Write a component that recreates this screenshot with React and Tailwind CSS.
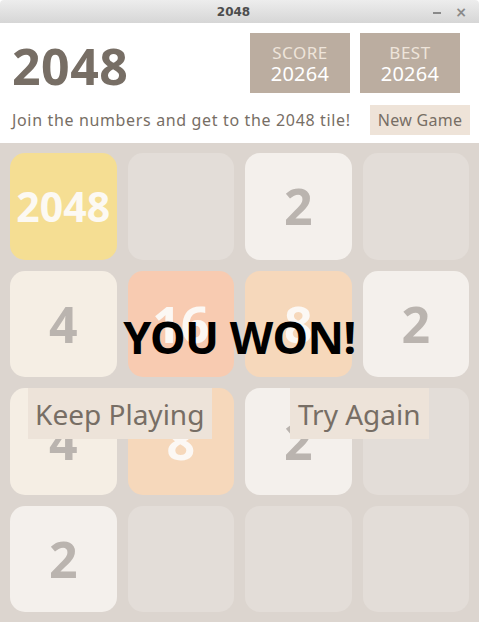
import React from 'react'

// faded look of the board in the "won" state
const TILE_STYLES = {
  0: 'bg-[#e3ddd8]',
  2: 'bg-[#f4f0ec] text-[#bab4af] text-[50px]',
  4: 'bg-[#f5eee4] text-[#bab4af] text-[50px]',
  8: 'bg-[#f6d8bb] text-[#fcf8f4] text-[50px]',
  16: 'bg-[#f8cbb1] text-[#fcf8f4] text-[50px]',
  2048: 'bg-[#f5de93] text-[#fcf9f3] text-[41px]',
}

const board = [
  2048, 0, 2, 0,
  4, 16, 8, 2,
  4, 8, 2, 0,
  2, 0, 0, 0,
]

function Tile({ value }) {
  return (
    <div className={`rounded-[15px] flex items-center justify-center font-bold leading-none ${TILE_STYLES[value]}`}>
      {value > 0 && value}
    </div>
  )
}

function ScoreBox({ label, value }) {
  return (
    <div className="w-[100px] h-[60px] bg-[#bbada0] flex flex-col items-center pt-[10px]">
      <span className="text-[17px] leading-[20px] tracking-[0.5px] text-[#eee4da]">{label}</span>
      <span className="text-[20px] leading-[22px] tracking-[0.3px] text-white">{value}</span>
    </div>
  )
}

export default function App() {
  return (
    <div className="w-[479px] h-[622px] flex flex-col bg-white overflow-hidden font-['Noto_Sans',sans-serif]">
      {/* barra de título de la ventana */}
      <div className="h-[23px] flex items-center bg-gradient-to-b from-[#ededed] to-[#d6d6d6] rounded-t-[4px] font-['DejaVu_Sans',sans-serif]">
        <div className="flex-1" />
        <span className="text-[12px] font-bold text-[#4d4d4d]">2048</span>
        <div className="flex-1 flex justify-end items-center gap-[14px] pr-[12px] text-[#8a8a8a]">
          <span className="w-[8px] h-[2px] bg-[#8a8a8a] mt-[3px]" />
          <span className="text-[14px] font-bold leading-none">×</span>
        </div>
      </div>

      {/* cabecera */}
      <div className="h-[120px] flex flex-col pl-[12px] pr-[9px] pt-[10px]">
        <div className="flex justify-between items-start h-[60px]">
          <h1 className="mt-[8px] text-[50px] leading-none font-bold tracking-[0.5px] text-[#776e65]">2048</h1>
          <div className="flex gap-[10px] mr-[10px]">
            <ScoreBox label="SCORE" value="20264" />
            <ScoreBox label="BEST" value="20264" />
          </div>
        </div>
        <div className="mt-[12px] h-[30px] flex justify-between items-center">
          <p className="text-[16px] leading-[30px] tracking-[0.65px] text-[#776e65]">Join the numbers and get to the 2048 tile!</p>
          <button className="w-[100px] h-[30px] bg-[#eee3d8] text-[16px] tracking-[0.3px] text-[#776e65]">New Game</button>
        </div>
      </div>

      {/* tablero */}
      <div className="relative flex-1 bg-[#dcd5cf] p-[10px] grid grid-cols-4 grid-rows-4 gap-[11px]">
        {board.map((v, i) => (
          <Tile key={i} value={v} />
        ))}

        <div className="absolute inset-0 flex flex-col items-center pt-[171px]">
          <div className="text-[45px] leading-[46px] font-bold tracking-[-0.5px] text-black">YOU WON!</div>
          <div className="mt-[28px] w-full grid grid-cols-2 justify-items-center">
            <button className="w-[184px] h-[51px] bg-[#ede3d9] text-[28px] text-[#776e65] text-center">Keep Playing</button>
            <button className="w-[139px] h-[51px] bg-[#ede3d9] text-[28px] text-[#776e65] text-center">Try Again</button>
          </div>
        </div>
      </div>
    </div>
  )
}
